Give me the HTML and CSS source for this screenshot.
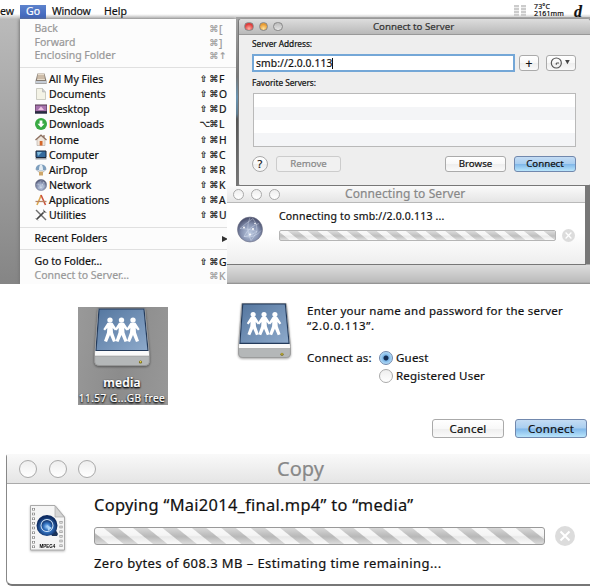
FILE: index.html
```html
<!DOCTYPE html>
<html lang="en">
<head>
<meta charset="utf-8">
<title>Connect to Server</title>
<link rel="stylesheet" href="styles.css">
</head>
<body>
<svg width="0" height="0" class="defs">
  <defs>
    <linearGradient id="blue" x1="0" y1="0" x2="1" y2="1"><stop offset="0" stop-color="#54769f"/><stop offset="1" stop-color="#8eaacb"/></linearGradient>
    <radialGradient id="ball" cx=".5" cy=".65" r=".6"><stop offset="0" stop-color="#bccae1"/><stop offset=".6" stop-color="#8591b0"/><stop offset="1" stop-color="#4d5370"/></radialGradient>
    <radialGradient id="qt" cx=".5" cy=".6" r=".6"><stop offset="0" stop-color="#a8d4ff"/><stop offset=".5" stop-color="#3474c2"/><stop offset="1" stop-color="#0e2c62"/></radialGradient>
    <g id="person"><circle cx="0" cy="2.6" r="2.7"/><path d="M-2.500 5.200H2.500L6.700 11.700 5 13 2.700 10.500 3 15 6 23.500 3 24.500 0 17.500 -3 24.500 -6 23.500 -3 15 -2.700 10.500 -5 13 -6.700 11.700Z"/></g>
    <symbol id="drive" viewBox="0 0 56 60">
      <path d="M4 .5H51L55.500 46V54Q55 57.500 51 57.500H5Q1 57.500 .5 54V46Z" fill="#fafafa" stroke="#888" stroke-width=".7"/>
      <path d="M5 1H50L54 42.500H2Z" fill="url(#blue)" stroke="#243b5b" stroke-width="1.200"/>
      <path d="M.7 48H55.300V54Q55 57.500 51 57.500H5Q1 57.500 .7 54Z" fill="#b4b7b8" stroke="#888" stroke-width=".5"/>
      <g fill="#fff"><use href="#person" x="16" y="9.500"/><use href="#person" x="27.500" y="9.500"/><use href="#person" x="39" y="9.500"/></g>
      <circle cx="46.500" cy="54" r="1.600" fill="#776a18"/><circle cx="46.500" cy="53.700" r=".8" fill="#f8e34c"/>
    </symbol>
    <symbol id="globe" viewBox="0 0 26 26">
      <circle cx="13" cy="13" r="12.500" fill="url(#ball)" stroke="#6b6f84" stroke-width=".6"/>
      <path d="M3 12Q10 6 16 2Q21 8 20 15Q13 20 7 20Q12 10 22 7M3 12Q12 12 20 15Q16 22 14 24Q8 12 13 1M7 20Q18 22 24 14" fill="none" stroke="#e6eefb" stroke-opacity=".6" stroke-width=".6"/>
      <g fill="#fff"><circle cx="16" cy="12.500" r="1"/><circle cx="7" cy="11" r=".9"/><circle cx="13" cy="18" r="1"/><circle cx="18" cy="7" r=".8"/></g>
    </symbol>
  </defs>
</svg>
<main class="canvas">
  <section class="desktop">
    <nav class="menubar">
      <span class="view">ew</span><span class="go">Go</span><span class="window-item">Window</span><span class="help">Help</span>
      <span class="meters"><i></i><i></i></span>
      <span class="stats">73°C<br>2161mm</span><b class="dee">d</b><i class="dot"></i>
    </nav>

    <div class="menu">
      <ul class="plain">
        <li><span>Back</span><kbd><s></s><s>⌘</s>[</kbd></li>
        <li><span>Forward</span><kbd><s></s><s>⌘</s>]</kbd></li>
        <li><span>Enclosing Folder</span><kbd><s></s><s>⌘</s><s>↑</s></kbd></li>
      </ul>
      <ul class="places">
        <li><svg viewBox="0 0 12 12"><path d="M2.500 .5H9.500L11.500 8V11H.5V8Z" fill="#837a71"/><path d="M3 .5H9L10 7H2Z" fill="#e6dccd"/><path d="M.5 8H11.500V10.500H.5Z" fill="#c5ccd5"/><path d="M2.500 3H9.500M2 5H10" stroke="#a58b72" stroke-width=".8"/></svg><span>All My Files</span><kbd><s>⇧</s><s>⌘</s>F</kbd></li>
        <li><svg viewBox="0 0 12 12"><path d="M1.500 .5H7.500L10.500 4V11.500H1.500Z" fill="#f4f3e6" stroke="#b9b9ae" stroke-width=".7"/><path d="M7.500 .5V4H10.500" fill="#ccc" stroke="#aaa" stroke-width=".5"/></svg><span>Documents</span><kbd><s>⇧</s><s>⌘</s>O</kbd></li>
        <li><svg viewBox="0 0 12 12"><path d="M0 1.500H12V10.500H0Z" fill="#50344f"/><path d="M.5 2.500H11.500V8H.5Z" fill="#a673ad"/><path d="M3 7L6 3.500 9 7Z" fill="#efc5e5"/><path d="M0 9.500H12" stroke="#272d44" stroke-width="2"/></svg><span>Desktop</span><kbd><s>⇧</s><s>⌘</s>D</kbd></li>
        <li><svg viewBox="0 0 12 12"><circle cx="6" cy="6" r="6" fill="#39aa43"/><path d="M4.600 2.500H7.400V5.800H9.500L6 9.600 2.500 5.800H4.600Z" fill="#fff"/></svg><span>Downloads</span><kbd><s>⌥</s><s>⌘</s>L</kbd></li>
        <li><svg viewBox="0 0 12 12"><path d="M2 5L6 2 10 5V11.500H2Z" fill="#eee5db" stroke="#a79a91" stroke-width=".5"/><path d="M.5 6L6 1 11.500 6M9 1V4" fill="none" stroke="#8b6c5b" stroke-width="1.200"/><path d="M4.700 7H7.500V11.500H4.700Z" fill="#d3672c"/></svg><span>Home</span><kbd><s>⇧</s><s>⌘</s>H</kbd></li>
        <li><svg viewBox="0 0 12 12"><path d="M1 2H11V8.500H1Z" fill="#356b9e" stroke="#19263a"/><path d="M2 3H7L3 7Z" fill="#83bddd"/><path d="M.5 9H11.500V10.500H.5Z" fill="#9b9ea4"/></svg><span>Computer</span><kbd><s>⇧</s><s>⌘</s>C</kbd></li>
        <li><svg viewBox="0 0 12 12"><path d="M.5 5.500Q1 .5 6 .5T11.500 5.500L8 6.500H4Z" fill="#7e9fbe"/><path d="M4 6Q4 1 6 .5Q8 1 8 6" fill="#e5edf3"/><path d="M1 5.500L5 9M11 5.500L7 9" stroke="#788391" stroke-width=".6"/><path d="M4 7.500H8V11.500H4Z" fill="#cda66a"/></svg><span>AirDrop</span><kbd><s>⇧</s><s>⌘</s>R</kbd></li>
        <li><svg><use href="#globe"/></svg><span>Network</span><kbd><s>⇧</s><s>⌘</s>K</kbd></li>
        <li><svg viewBox="0 0 12 12"><path d="M2 11L6.300 1" stroke="#dca84e" stroke-width="1.600"/><path d="M6 1L10.500 11" stroke="#cc513b" stroke-width="1.600"/><path d="M.5 7.500H11.500" stroke="#b78463" stroke-width="1.300"/></svg><span>Applications</span><kbd><s>⇧</s><s>⌘</s>A</kbd></li>
        <li><svg viewBox="0 0 12 12"><path d="M1 1L11 11" stroke="#707070" stroke-width="1.400"/><path d="M10 2L1.500 10.500" stroke="#444" stroke-width="1.700"/><path d="M8.500 .5V3.500H11.500M.5 9L3 11.500" stroke="#999" fill="none"/></svg><span>Utilities</span><kbd><s>⇧</s><s>⌘</s>U</kbd></li>
      </ul>
      <div class="recent"><span>Recent Folders</span><i></i></div>
      <ul class="plain last">
        <li class="active"><span>Go to Folder…</span><kbd><s>⇧</s><s>⌘</s>G</kbd></li>
        <li><span>Connect to Server…</span><kbd><s></s><s>⌘</s>K</kbd></li>
      </ul>
    </div>

    <div class="backdrop"></div>
    <div class="lower-bar"></div>
    <section class="connecting">
      <header><span class="lights"><i></i><i></i><i></i></span><h2>Connecting to Server</h2></header>
      <div class="connecting-body">
        <svg class="network"><use href="#globe"/></svg>
        <div class="task"><p>Connecting to smb://2.0.0.113 ...</p><div class="progress"></div></div>
        <svg class="stop" viewBox="0 0 20 20"><circle cx="10" cy="10" r="10" fill="#dcdcdc"/><path d="M5.500 5.500L14.500 14.500M14.500 5.500L5.500 14.500" stroke="#fff" stroke-width="2"/></svg>
      </div>
    </section>

    <section class="server">
      <header><span class="lights"><i class="red"></i><i class="yellow"></i><i class="gray"></i></span><h2>Connect to Server</h2></header>
      <div class="server-body">
        <label>Server Address:</label>
        <div class="address"><div class="field"><span>smb://2.0.0.113</span><i></i></div><button class="plus">+</button><button class="history"><svg viewBox="0 0 22 12"><circle cx="7" cy="6" r="4.300" fill="none" stroke="#555"/><path d="M7 6H9.300M7 6V7.500" stroke="#555"/><path d="M14.500 3.500H18.500L16.500 7Z" fill="#444"/></svg></button></div>
        <label class="favorites">Favorite Servers:</label>
        <div class="list"><i></i><i></i><i></i><i></i></div>
        <footer><button class="question">?</button><button class="remove">Remove</button><button class="browse">Browse</button><button class="primary">Connect</button></footer>
      </div>
    </section>
  </section>

  <section class="login-row">
    <div class="volume"><svg><use href="#drive"/></svg><strong>media</strong><span>11.57 G...GB free</span></div>
    <svg class="server-drive"><use href="#drive"/></svg>
    <div class="login">
      <p class="prompt"><span class="l1">Enter your name and password for the server</span><br><span class="l2">“2.0.0.113”.</span></p>
      <div class="choices"><span class="as">Connect as:</span><div><label><i class="on"></i><span>Guest</span></label><label><i></i><span>Registered User</span></label></div></div>
      <div class="actions"><button>Cancel</button><button class="primary">Connect</button></div>
    </div>
  </section>

  <section class="copy">
    <header><span class="lights"><i></i><i></i><i></i></span><h2>Copy</h2></header>
    <div class="copy-body">
      <svg class="movie" viewBox="0 0 35 46"><path d="M.5 .5H25L34.500 12V45H.5Z" fill="#f5f5f5" stroke="#aaa"/><path d="M25 1V12H34Z" fill="#d5d5d5" stroke="#aaa" stroke-width=".7"/><path d="M3.500 3V43M31 16V43" stroke="#888" stroke-width="3" stroke-dasharray="2.500 2.200"/><path d="M3.500 3V43M31 16V43" stroke="#fff" stroke-width="1.300" stroke-dasharray="1.500 3.200" stroke-dashoffset="-.5"/><path d="M17 22L23 20 28 29 27 31H22Z" fill="#1b3358"/><circle cx="17" cy="20.500" r="8.500" fill="#d6e8fb" stroke="url(#qt)" stroke-width="4"/><circle cx="17" cy="20.500" r="5.500" fill="url(#qt)"/><path d="M17 20L22 23 18 26Z" fill="#abd3f8"/><text x="17.500" y="42.500" text-anchor="middle">MPEG4</text></svg>
      <div class="task"><p class="title">Copying “Mai2014_final.mp4” to “media”</p><div class="bar-line"><div class="progress large"></div><svg class="stop" viewBox="0 0 20 20"><circle cx="10" cy="10" r="10" fill="#dcdcdc"/><path d="M5.500 5.500L14.500 14.500M14.500 5.500L5.500 14.500" stroke="#fff" stroke-width="2"/></svg></div><p class="status">Zero bytes of 608.3 MB – Estimating time remaining...</p></div>
    </div>
  </section>
</main>
</body>
</html>
```
FILE: styles.css
```css
* { box-sizing: border-box; }
body { margin: 0; background: #fff; color: #111; font: 10.5px "Noto Sans", "DejaVu Sans", sans-serif; -webkit-text-stroke: .2px; }
h2, p, ul { margin: 0; padding: 0; font-weight: 400; }
li { list-style: none; }
s { text-decoration: none; }
button { padding: 0; margin: 0; font: inherit; color: #111; border: 1px solid #aaa; border-radius: 3px; background: linear-gradient(#fff, #f8f8f8 50%, #eee 52%, #fafafa); white-space: nowrap; }
.primary { border-color: #7188ad; background: linear-gradient(#c4dcf4, #a9cef0 48%, #80b7e9 52%, #b9e5fb); }
.defs { position: absolute; }
.canvas { width: 590px; height: 586px; overflow: hidden; display: flex; flex-direction: column; }
.desktop { position: relative; flex: none; height: 284px; overflow: hidden; background: linear-gradient(#bebebe, #858585); }
.menubar { height: 19px; padding-top: 5px; display: flex; background: linear-gradient(#fff 0 14px, #e0e0e0 16px, #bbb 19px); line-height: 13px; white-space: nowrap; }
.view { width: 20px; }
.go { width: 26px; height: 14px; padding-left: 6px; color: #fff; background: linear-gradient(#5d83cd, #3d62b9); }
.window-item { width: 58px; padding-left: 6px; letter-spacing: -.2px; }
.help { width: 407px; }
.meters { display: flex; gap: 2px; width: 20px; }
.meters i { width: 5px; height: 11px; background: repeating-linear-gradient(#ccc 0 2px, #eee 2px 3px); }
.stats { width: 40px; font-size: 7px; line-height: 7px; margin-top: -2px; letter-spacing: .15px; }
.dee { font: italic bold 16px/13px "Liberation Serif", serif; width: 18px; }
.dot { width: 5px; height: 5px; margin-top: 4px; border-radius: 50%; background: #222; }
.help { margin-right: 1px; flex: none; }
.view, .go, .window-item, .meters, .stats, .dee, .dot { flex: none; }
.help { width: 409px; }

.menu { position: absolute; left: 20px; top: 19px; width: 216px; height: 265px; background: #fcfcfc; box-shadow: -1px 0 3px #777; }
.menu li { display: flex; white-space: nowrap; }
.plain { padding: 3px 0 0 14.5px; height: 48.5px; color: #999; border-bottom: 1px solid #e0e0e0; }
.plain li { height: 13.7px; line-height: 13.7px; }
.menu li > span { width: 150px; }
.menu kbd { display: flex; font: 10.3px/14px "Noto Sans", sans-serif; margin-left: 15px; }
.menu s { flex: none; width: 9.7px; font-family: "DejaVu Sans", sans-serif; font-size: 9.3px; }
.places { padding: 4px 0 0 14.5px; height: 160.5px; border-bottom: 1px solid #e0e0e0; }
.places li { height: 15.15px; align-items: center; }
.places svg { flex: none; width: 12px; height: 12px; margin-right: 2.5px; }
.places li > span { width: 135.5px; }
.recent { height: 22px; line-height: 21px; padding: 0 5px 0 14.5px; display: flex; justify-content: space-between; align-items: center; border-bottom: 1px solid #e0e0e0; }
.recent i { border-left: 6px solid #333; border-top: 3.5px solid transparent; border-bottom: 3.5px solid transparent; margin-right: 3px; }
.plain.last { height: 33px; padding-top: 5px; border: 0; }
.plain .active { color: #111; }

.backdrop { position: absolute; left: 236px; top: 17px; width: 354px; height: 170px; background: linear-gradient(#a4a4a4, #777 35%, #6993b0 47%, #607c8f 57%, #555 60%, #777); }
.lower-bar { position: absolute; left: 227px; top: 186px; width: 363px; height: 98px; background: linear-gradient(#777 0 78px, #ddd 79px, #bbb 96px, #888 98px); }
header { display: flex; align-items: center; }
.lights { display: flex; }
.lights i { border: 1px solid #aaa; border-radius: 50%; background: linear-gradient(#eee, #fff); }
.connecting { position: absolute; left: 227px; top: 186px; width: 359px; height: 79px; background: linear-gradient(#fff 60%, #eee); border-bottom: 1px solid #777; border-right: 1px solid #777; }
.connecting header { height: 17px; background: linear-gradient(#fafafa, #e5e5e5); border-bottom: 1px solid #b9b9b9; }
.connecting .lights { width: 118px; gap: 7px; padding-left: 6px; }
.connecting .lights i { width: 11px; height: 11px; }
.connecting h2 { color: #888; font-size: 12px; line-height: 16px; letter-spacing: .1px; }
.connecting-body { display: flex; padding: 5px 0 0 10px; }
.network { width: 26px; height: 27px; margin: 8px 16px 0 0; }
.connecting p { line-height: 16px; font-size: 10.5px; letter-spacing: .18px; white-space: nowrap; }
.progress { width: 277px; height: 11px; margin-top: 6px; border: 1px solid #b5b5b5; border-radius: 2px; background: linear-gradient(#fff6, #fff0 45%, #9992 55%, #fff7), repeating-linear-gradient(38.7deg, #c4c4c4 0 5.5px, #f5f5f5 6.3px 11.5px, #c4c4c4 12.3px); }
.connecting .stop { width: 13px; height: 13px; margin: 21px 0 0 6px; }

.server { position: absolute; left: 238px; top: 18px; width: 353px; height: 168px; border: 1px solid #777; border-top-color: #999; border-radius: 4px 4px 2px 2px; background: #eee; }
.server header { height: 16px; border-bottom: 1px solid #999; background: linear-gradient(#ddd, #b9b9b9); border-radius: 4px 4px 0 0; }
.server .lights { width: 134px; gap: 5px; padding-left: 5px; }
.server .lights i { width: 9.5px; height: 9.5px; border-color: #888; }
.server .red { background: radial-gradient(circle at 50% 80%, #ffb1a5, #df3c3b 65%); }
.server .yellow { background: radial-gradient(circle at 50% 80%, #ffe29b, #e89b31 65%); }
.server .gray { background: linear-gradient(#bbb, #e3e3e3); }
.server h2 { font-size: 9.7px; line-height: 15px; color: #333; }
.server-body { padding: 2px 0 0 14px; }
.server-body > label { display: block; line-height: 14px; font-size: 8.3px; letter-spacing: -.05px; margin-left: -1px; }
.address { display: flex; align-items: center; height: 18px; margin-top: 3px; margin-left: -1px; }
.field { display: flex; align-items: center; width: 263px; height: 18px; padding-left: 2px; background: #fff; border: 2px solid #74a7d7; font-size: 10.3px; letter-spacing: .1px; }
.field i { width: 1px; height: 11px; background: #111; }
.plus { width: 20px; height: 16px; margin-left: 4px; font-size: 12px; line-height: 13px; }
.history { width: 30px; height: 16px; margin-left: 7px; }
.history svg { display: block; width: 28px; height: 14px; }
.server-body .favorites { margin-top: 4px; }
.list { width: 323px; height: 54px; margin-top: 3px; display: flex; flex-direction: column; border: 1px solid #b9b9b9; background: #fff; }
.list i { flex: 1; }
.list i:nth-child(even) { background: #f4f5f7; }
.server footer { display: flex; align-items: center; margin-top: 9px; height: 16px; margin-left: -1px; }
.server footer button { height: 16px; font-size: 9.7px; line-height: 14px; }
.server footer .question { width: 16px; height: 16px; border-radius: 50%; font-size: 11px; }
.server footer .remove { width: 65px; margin: 0 104px 0 8px; color: #888; border-color: #ccc; background: #f1f1f1; }
.server footer .browse { width: 61px; }
.server footer .primary { width: 62px; margin-left: 8px; }

.login-row { flex: none; display: flex; height: 170px; padding-top: 19px; }
.volume { width: 90px; height: 98px; margin: 4px 0 0 78px; padding-top: 1px; background: linear-gradient(100deg, #999, #8c8c8c 50%, #989898); color: #fff; display: flex; flex-direction: column; align-items: center; text-shadow: 0 1px 2px #000, 0 1px 2px #000; white-space: nowrap; }
.volume svg { width: 56px; height: 60px; margin-right: 3px; filter: drop-shadow(0 1px 1px #555); }
.volume strong { font-size: 12px; font-weight: 600; line-height: 16px; margin: 7px 2px 0 0; letter-spacing: .2px; }
.volume span { font-size: 10px; line-height: 14px; margin-right: 2px; letter-spacing: .5px; }
.server-drive { width: 53px; height: 57px; margin: 0 16px 0 70px; filter: drop-shadow(0 1px 1px #aaa); }
.login { width: 283px; }
.prompt { font-size: 11.5px; line-height: 15px; white-space: nowrap; }
.l1 { letter-spacing: .25px; }
.l2 { letter-spacing: .65px; }
.choices { display: flex; margin-top: 16px; font-size: 11.5px; line-height: 18px; letter-spacing: .2px; }
.as { width: 72px; white-space: nowrap; }
.choices label { display: flex; align-items: center; height: 18px; white-space: nowrap; }
.choices i { flex: none; width: 14px; height: 14px; margin-right: 3px; border: 1px solid #aaa; border-radius: 50%; background: linear-gradient(#eee, #fff); }
.choices .on { border-color: #7188ad; background: radial-gradient(circle, #142c52 0 2px, #7bb4e6 3px, #b3dcf7 6px); }
.actions { display: flex; gap: 11px; margin: 34px 0 0 125px; letter-spacing: .2px; }
.actions button { width: 72px; height: 19px; font-size: 11.5px; line-height: 16px; letter-spacing: .2px; }

.copy { flex: none; width: 590px; height: 132px; margin-left: 6px; border-left: 1px solid #888; border-bottom: 2px solid #777; border-radius: 3px 0 0 6px; }
.copy header { height: 30px; border-bottom: 1px solid #aaa; background: linear-gradient(#f9f9f9, #e5e5e5); }
.copy .lights { width: 270px; gap: 11.5px; padding-left: 12px; }
.copy .lights i { width: 18px; height: 18px; }
.copy h2 { color: #888; font-size: 20px; line-height: 28px; }
.copy-body { display: flex; padding: 9px 0 0 23px; }
.movie { width: 35px; height: 46px; margin: 12px 29px 0 0; filter: drop-shadow(0 1px 1px #bbb); }
.movie text { font: bold 4.5px "Liberation Sans", sans-serif; stroke: none; }
.title { font-size: 16.4px; line-height: 24px; letter-spacing: .3px; white-space: nowrap; }
.bar-line { display: flex; align-items: center; height: 20px; margin-top: 9px; }
.large { width: 451px; height: 18px; margin: 0; border-color: #999; border-radius: 3px; background: linear-gradient(#fff6, #fff0 45%, #9992 55%, #fff7), repeating-linear-gradient(38.7deg, #bdbdbd 0 8px, #f5f5f5 9px 17.4px, #bdbdbd 18.4px); }
.bar-line .stop { width: 20px; height: 20px; margin-left: 10px; }
.status { font-size: 13px; line-height: 18px; margin-top: 8px; letter-spacing: .42px; white-space: nowrap; }
```
